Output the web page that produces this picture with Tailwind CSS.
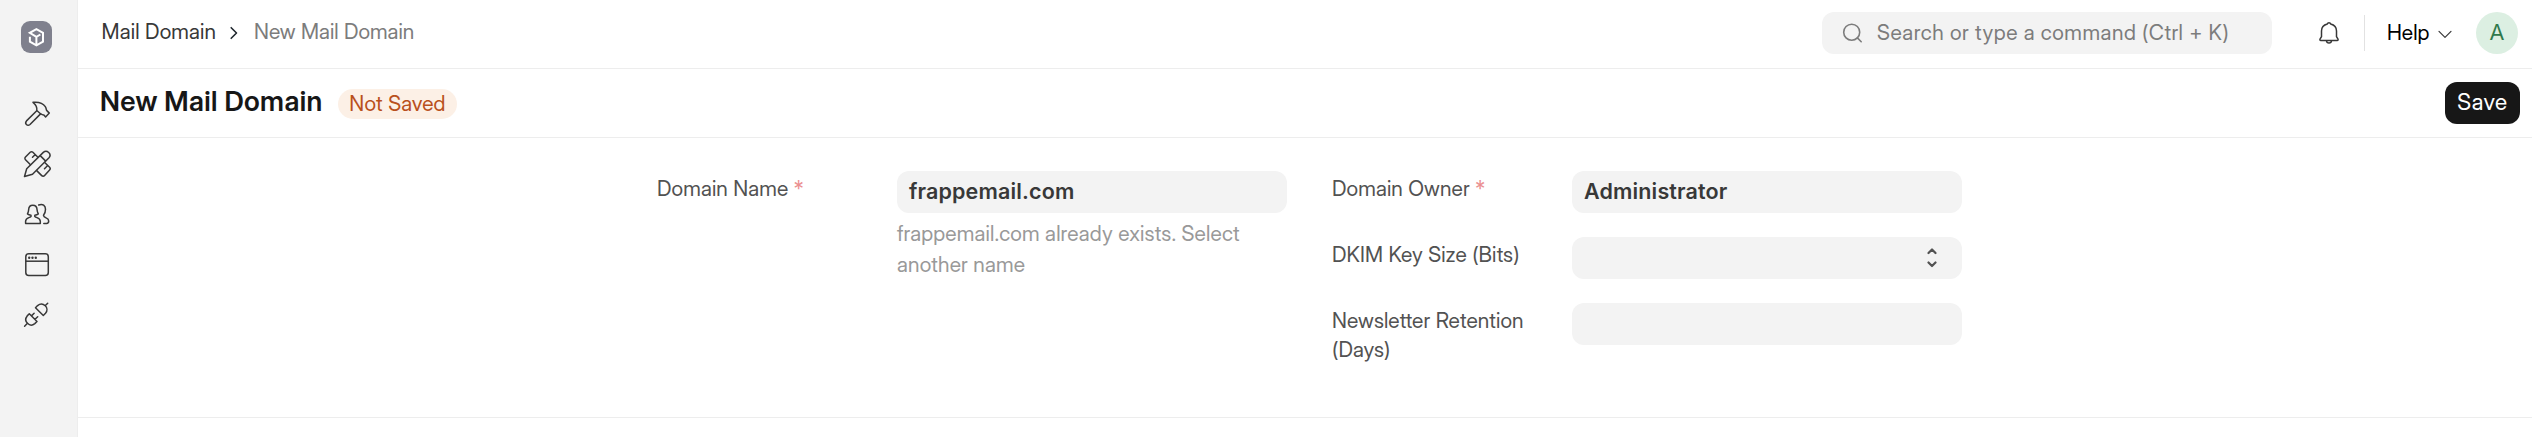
<!DOCTYPE html>
<html lang="en">
<head>
<meta charset="utf-8">
<title>New Mail Domain</title>
<script src="https://cdn.jsdelivr.net/npm/@tailwindcss/browser@4"></script>
</head>
<body class="flex h-[437px] w-[2532px] overflow-hidden bg-white font-['Inter_Display',Inter,sans-serif] text-[21px] leading-[29px] tracking-[0.15px] text-[#525252]">
<aside class="flex w-[78px] shrink-0 flex-col border-r border-[#ededed] bg-[#f3f3f3] pt-[21px] text-[#383838]">
  <div class="ml-[21px] h-8 w-[31px] rounded-[9px] bg-[#7f808d]">
    <svg width="31" height="32" viewBox="0 0 31 32" fill="none" stroke="#fff" stroke-width="2"><path d="M8.9 15.8v4.8l6.5 3.8 6.6-3.8v-8.8l-6.6-3.7-6.6 3.7 6.6 4 4-2.3M15.4 15.8v8.4"/></svg>
  </div>
  <nav class="mt-[46px] ml-[23px] flex flex-col gap-5">
    <svg width="30" height="30" viewBox="0 0 30 30" fill="none" stroke="currentColor" stroke-width="1.5" stroke-linejoin="round" stroke-linecap="round"><path d="M10 3.3c5-.5 9.600.3 12.300 4.400.8 1.300.9 2.300 1.300 3.700l2.700 2.700-3.700 3.800-1.700-1.900c-1.100.1-2.300-.5-3.400-1.300l-3.700-3.200c.5-3.200-.8-5.700-3.800-8.200Z"/><path d="m13.500 12-10 9.900c-2.300 2.700.900 5.700 3.500 3.600l10.300-10.400"/></svg>
    <svg width="30" height="30" viewBox="0 0 30 30" fill="none" stroke="currentColor" stroke-width="1.5" stroke-linejoin="round" stroke-linecap="round"><path d="m1.500 27.500 2.200-7.700L20.300 3.400c3.600-3.300 8.800 1.600 5.700 5.300L9.500 25.200ZM17.200 6.600l5.500 5.500"/><path d="m7.500 15.700-5-5c-.9-.9-.7-2 0-2.700l4.700-4.700c.8-.8 1.900-.8 2.700 0l5 5M9.500 8.200l2.500-2.500M21.700 13.500l4.900 4.800c.8.800.8 1.900 0 2.700l-5 5.500c-.8.900-2.100.9-2.900.1l-5-5M21.500 19.700l2.700-2.700"/></svg>
    <svg width="30" height="30" viewBox="0 0 30 30" fill="none" stroke="currentColor" stroke-width="1.5" stroke-linejoin="round" stroke-linecap="round"><path d="M9.800 6.300c-3.200 0-4.100 2.300-4.200 4.700-.1 1.500-.5 2.500-1.100 3.900 1 .9 2.200 1.200 3.500 1.300v1.300c-1.700 1.600-5.300 1-5.400 4.800v2.100h14.700v-2.100c-.1-3.800-3.800-3.200-5.500-4.800v-1.300c1.300-.1 2.500-.4 3.500-1.300-.7-1.400-1.100-2.400-1.200-3.900-.1-2.400-1.100-4.700-4.300-4.700Z"/><path d="M15.700 6c4.100-1.500 6.800.7 6.800 4.300 0 2.500-.6 4.400-2 6 .4 3.300 5.200 1.900 5.200 5.700 0 1.500-.5 2.400-2.100 2.400h-2.800"/></svg>
    <svg width="30" height="30" viewBox="0 0 30 30" fill="none" stroke="currentColor" stroke-width="1.500"><rect x="2.800" y="4.800" width="22.500" height="21.700" rx="3"/><path d="M2.800 12.200h22.500"/><g fill="currentColor" stroke="none"><circle cx="6.200" cy="8.800" r="1.200"/><circle cx="9.500" cy="8.800" r="1.200"/><circle cx="12.800" cy="8.800" r="1.200"/></g></svg>
    <svg width="30" height="30" viewBox="0 0 30 30" fill="none" stroke="currentColor" stroke-width="1.500" stroke-linejoin="round" stroke-linecap="round"><path d="m24.700 4.200-2.300 2.300M12.500 8.800l7.800 7.700 2.200-2.200C27 9.200 20 2 14.600 6.600ZM6.300 14.800l7.700 7.700-2.200 2.100C6.600 29 0 22 4.200 16.900ZM4.200 24.500l-2.600 2.700M8.500 16.900l2.600-2.600M12 20.300l2.700-2.600"/></svg>
  </nav>
</aside>
<main class="flex min-w-0 flex-1 flex-col">
  <header class="flex h-[69px] shrink-0 items-center border-b border-[#ededed] pr-[14px] pb-[2px] pl-[23.5px]">
    <div class="flex items-center pb-[3px] text-[#383838]">
      <span class="w-[112.5px] whitespace-nowrap">Mail Domain</span>
      <svg class="mt-[3px] ml-[15px] mr-[15px]" width="10" height="14" viewBox="0 0 10 14" fill="none" stroke="#1f272e" stroke-width="1.600" stroke-linecap="round" stroke-linejoin="round"><path d="m2.200 1.700 5.300 5.300-5.300 5.300"/></svg>
      <span class="tracking-[0.03px] text-[#7c7c7c]">New Mail Domain</span>
    </div>
    <div class="ml-auto flex h-[42px] w-[450px] items-center rounded-xl bg-[#f3f3f3] pl-[20px] text-[#7c7c7c]">
      <svg width="21" height="21" viewBox="0 0 21 21" fill="none" stroke="currentColor" stroke-width="1.600" stroke-linecap="round"><circle cx="9.700" cy="9.200" r="8"/><path d="m15.400 14.900 3.800 3.800"/></svg>
      <span class="ml-[14px] pb-px tracking-[0.5px]">Search or type a command (Ctrl + K)</span>
    </div>
    <svg class="ml-[46px]" width="22" height="24" viewBox="0 0 22 24" fill="none" stroke="#383838" stroke-width="1.500" stroke-linejoin="round"><path d="M11 1.700c-.9 0-1.500.5-1.700 1.300C5.500 4 3.500 6.300 3.500 10v5.700L2 18.200c-.3.700 0 1.200.8 1.200h16.400c.8 0 1.100-.5.8-1.200l-1.500-2.500V10c0-3.700-2-6-5.800-7-.2-.8-.8-1.300-1.700-1.300ZM8.400 19.500c.4 3.400 4.800 3.400 5.200 0"/></svg>
    <div class="ml-6 h-9 w-px bg-[#e2e2e2]"></div>
    <span class="ml-[22px] w-[43px] pb-px tracking-normal text-black">Help</span>
    <svg class="mt-[2px] ml-[8px]" width="14" height="9" viewBox="0 0 14 9" fill="none" stroke="#383838" stroke-width="1.200" stroke-linecap="round" stroke-linejoin="round"><path d="m1 1.300 6 6 6-6"/></svg>
    <div class="ml-[24px] flex size-[42px] items-center justify-center rounded-full bg-[#dcefe2] pb-[2px] text-[22px] tracking-normal text-[#30794c]">A</div>
  </header>
  <section class="flex h-[69px] shrink-0 items-center border-b border-[#ededed] pr-3 pl-[22px]">
    <h1 class="w-[222px] pb-[4px] text-[27.5px] font-semibold tracking-[0.4px] whitespace-nowrap text-[#171717]">New Mail Domain</h1>
    <span class="mt-[2px] ml-4 flex h-[30px] w-[119px] items-center justify-center rounded-full bg-[#fcf0e6] pb-px text-[#b9501c]">Not Saved</span>
    <button class="ml-auto h-[42px] w-[75px] rounded-xl bg-[#171717] pb-[3px] text-[22.5px] tracking-[0.6px] text-white">Save</button>
  </section>
  <section class="flex h-[280px] shrink-0 border-b border-[#ededed] pt-[33px] pl-[579px]">
    <div class="flex w-[675px] items-start">
      <label class="w-[240px] pt-[3px] tracking-[0.1px]">Domain Name <span class="text-[#eb9091]">*</span></label>
      <div class="w-[390px]">
        <div class="flex h-[42px] items-center rounded-xl bg-[#f3f3f3] pb-[2px] pl-3 font-[Inter] text-[21.5px] font-semibold tracking-[0.15px] text-[#383838]">frappemail.com</div>
        <p class="mt-[5px] leading-[31px] text-[#999]">frappemail.com already exists. Select another name</p>
      </div>
    </div>
    <div class="flex w-[630px] flex-col gap-6">
      <div class="flex h-[42px] items-start">
        <label class="w-[240px] pt-[3px] tracking-[0.1px]">Domain Owner <span class="text-[#eb9091]">*</span></label>
        <div class="flex h-[42px] w-[390px] items-center rounded-xl bg-[#f3f3f3] pb-[2px] pl-3 font-[Inter] text-[21.5px] font-semibold tracking-[0.15px] text-[#383838]">Administrator</div>
      </div>
      <div class="flex h-[42px] items-start">
        <label class="w-[240px] pt-[3px] tracking-[0.1px]">DKIM Key Size (Bits)</label>
        <div class="flex h-[42px] w-[390px] items-center justify-end rounded-xl bg-[#f3f3f3] pr-[24px]">
          <svg width="12" height="22" viewBox="0 0 12 22" fill="none" stroke="#525252" stroke-width="2.200" stroke-linecap="round" stroke-linejoin="round"><path d="m2.500 6 3.500-3.500L9.500 6M2.500 15.500 6 19l3.500-3.500"/></svg>
        </div>
      </div>
      <div class="flex h-[42px] items-start">
        <label class="w-[240px] pt-[3px] pr-10 tracking-[0.1px]">Newsletter Retention (Days)</label>
        <div class="h-[42px] w-[390px] rounded-xl bg-[#f3f3f3]"></div>
      </div>
    </div>
  </section>
</main>
</body>
</html>
